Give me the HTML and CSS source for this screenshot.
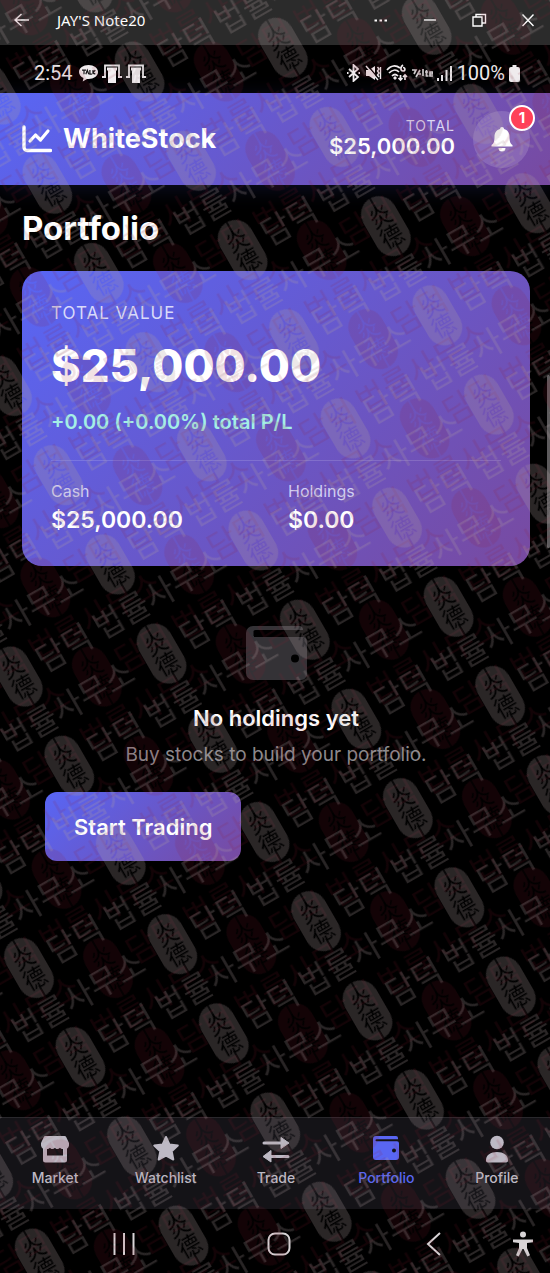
FILE: index.html
```html
<!DOCTYPE html>
<html lang="en">
<head>
<meta charset="utf-8">
<meta name="viewport" content="width=device-width, initial-scale=1">
<title>WhiteStock – Portfolio</title>
<link rel="stylesheet" href="styles.css">
</head>
<body>
<div class="screen">
  <div class="titlebar">
    <button class="icon-button" aria-label="Back"><svg width="18" height="18" viewBox="0 0 18 18"><path d="M16 9H2M8.500 3L2 9l6.500 6" class="line"/></svg></button>
    <span class="device-name">JAY'S Note20</span>
    <div class="window-controls">
      <button class="icon-button" aria-label="More"><svg width="18" height="18" viewBox="0 0 18 18"><path d="M2.500 8.500h2.500v2H2.500zM7.500 8.500h2.500v2H7.500zM12.500 8.500h2.500v2h-2.500z" fill="currentColor"/></svg></button>
      <button class="icon-button" aria-label="Minimize"><svg width="18" height="18" viewBox="0 0 18 18"><path d="M3 9h12" class="line"/></svg></button>
      <button class="icon-button" aria-label="Restore"><svg width="18" height="18" viewBox="0 0 18 18"><path d="M3 6h9v9H3zM6 6V3.500h9.500V12H12" class="line"/></svg></button>
      <button class="icon-button" aria-label="Close"><svg width="18" height="18" viewBox="0 0 18 18"><path d="M3.500 3.500l11 11.500M14.500 3.500l-11 11.500" class="line"/></svg></button>
    </div>
  </div>

  <div class="statusbar">
    <span>2:54</span>
    <svg class="talk" width="19" height="17" viewBox="0 0 19 17" aria-hidden="true"><path d="M9.500 0C4.200 0 0 3.100 0 7c0 2.600 1.800 4.800 4.500 6l-.8 3.600L8 13.900c.5.100 1 .1 1.500.1 5.300 0 9.500-3.100 9.500-7S14.800 0 9.500 0z" fill="#efebed"/><path d="M3 5.200h4M5 5.200v4M6.800 9.200l1.500-4 1.500 4M10.900 5v4.200h2M14 5v4.200M16.300 5.200L14 7.400l2.300 1.800" fill="none" stroke="#161416" stroke-width="1.200"/></svg>
    <svg width="20" height="19" viewBox="0 0 20 19" aria-hidden="true"><path d="M3 13V1.500h14V13M0 13h4M16 13h4" fill="none" stroke="#e8e4e6" stroke-width="1.800"/><path d="M5 3.500h10v3h-1V19H6V6.500H5z" fill="#f2eef0"/></svg>
    <svg width="20" height="19" viewBox="0 0 20 19" aria-hidden="true"><path d="M3 13V1.500h14V13M0 13h4M16 13h4" fill="none" stroke="#e8e4e6" stroke-width="1.800"/><path d="M5 3.500h10v3h-1V19H6V6.500H5z" fill="#f2eef0"/></svg>
    <div class="status-right">
      <svg width="15" height="18" viewBox="0 0 15 18" aria-hidden="true"><path d="M3 5l9 8-4.500 4V1L12 5l-9 8M1 9h1.500M12.500 9H14" fill="none" stroke="#efebed" stroke-width="1.800"/></svg>
      <svg width="17" height="16" viewBox="0 0 17 16" aria-hidden="true"><path d="M1 5h3l6-4v14l-6-4H1z" fill="#efebed"/><path d="M3 1l11 13" stroke="#000" stroke-width="1.200"/><path d="M1 1l12 14M12.500 2l1.500 2-1.500 2 1.500 2-1.500 2 1.500 2M15.500 2v12" fill="none" stroke="#efebed" stroke-width="1.400"/></svg>
      <svg width="22" height="18" viewBox="0 0 22 18" aria-hidden="true"><path d="M1 6c4-5 9-5 13-2M3 9c3-3 7-4 10-1M6 12c2-2 4-2 6 0M17 1c-3 2-2.500 6 0 6 2.500 0 2.500-3.500 0-3.500M14.500 11v5M12.500 14l2 2 2-2M19 16v-5M17 13l2-2 2 2" fill="none" stroke="#efebed" stroke-width="1.700"/><path d="M7 14l2-2 2 2-2 2z" fill="#efebed"/></svg>
      <svg width="21" height="10" viewBox="0 0 21 10" aria-hidden="true"><path d="M0 2h4L2 6M4 9l4-7M6 6h3M11 1v7M14.500 2v6h2M13 4h3M18 6h2.500V4H18v4h3" fill="none" stroke="#cfcbcd" stroke-width="1.700"/></svg>
      <svg width="16" height="16" viewBox="0 0 16 16" aria-hidden="true"><path d="M1 13v3M5 10v6M9.500 5v11M14 1v15" stroke="#e8e4e6" stroke-width="2"/></svg>
      <span>100%</span>
      <svg width="11" height="17" viewBox="0 0 11 17" aria-hidden="true"><path d="M3.500 0h4v2H9a2 2 0 0 1 2 2v11a2 2 0 0 1-2 2H2a2 2 0 0 1-2-2V4a2 2 0 0 1 2-2h1.500z" fill="#efebed"/></svg>
    </div>
  </div>

  <header class="app-header">
    <div class="brand">
      <svg width="30" height="28" viewBox="0 0 30 28" aria-hidden="true"><path d="M2 2v20.500a3 3 0 0 0 3 3h23.500" fill="none" stroke="#fff" stroke-width="3.400" stroke-linecap="round"/><path d="M8 16l5.500-6 5 5 7.500-9" fill="none" stroke="#fff" stroke-width="3.200" stroke-linecap="round" stroke-linejoin="round"/></svg>
      <span class="brand-name">WhiteStock</span>
    </div>
    <div class="header-total">
      <span class="header-label">TOTAL</span>
      <span class="header-value">$25,000.00</span>
    </div>
    <button class="bell" aria-label="Notifications, 1 new">
      <svg width="22" height="25" viewBox="0 0 22 25" aria-hidden="true"><path d="M11 0a2 2 0 0 1 2 2c3.500.900 5.500 3.800 5.500 7.500 0 5 .7 7 3 8.500v1.500H.5V18c2.300-1.500 3-3.500 3-8.500C3.500 5.800 5.500 2.900 9 2a2 2 0 0 1 2-2zM7.500 21h7a3.500 3.500 0 0 1-7 0z" fill="#fff"/></svg>
      <span class="badge">1</span>
    </button>
  </header>

  <main class="content">
    <h1 class="page-title">Portfolio</h1>
    <section class="card">
      <span class="card-label">TOTAL VALUE</span>
      <span class="card-value">$25,000.00</span>
      <span class="card-change">+0.00 (+0.00%) total P/L</span>
      <div class="split">
        <div class="stat"><span class="stat-label">Cash</span><span class="stat-value">$25,000.00</span></div>
        <div class="stat"><span class="stat-label">Holdings</span><span class="stat-value">$0.00</span></div>
      </div>
    </section>
    <section class="empty">
      <svg class="empty-icon" width="61" height="54" viewBox="0 0 61 54" aria-hidden="true"><path fill-rule="evenodd" d="M7 0h46a4 4 0 0 1 4 4H9.500a3 3 0 0 0-2 1V10H55a6 6 0 0 1 6 6v32a6 6 0 0 1-6 6H7a7 7 0 0 1-7-7V7a7 7 0 0 1 7-7zM49 28.500a4 4 0 1 0 0 8 4 4 0 0 0 0-8z" fill="#343236"/><path d="M8 7h49v4H8z" fill="#000"/></svg>
      <h2 class="empty-title">No holdings yet</h2>
      <p class="empty-text">Buy stocks to build your portfolio.</p>
      <button class="primary">Start Trading</button>
    </section>
  </main>

  <nav class="tabs">
    <a class="tab" href="#market"><svg width="28" height="28" viewBox="0 0 28 28" aria-hidden="true"><path fill-rule="evenodd" d="M4.500 1h19a2 2 0 0 1 1.800 1.200L28 8v2.500a4 4 0 0 1-2 3.200V25a2.500 2.500 0 0 1-2.500 2.500h-19A2.500 2.500 0 0 1 2 25V13.700a4 4 0 0 1-2-3.200V8l2.700-5.800A2 2 0 0 1 4.500 1zM6 14v6.500h16V14c-1.500 0-2.500-.5-3-1.300-1.500 1.700-4 1.700-5 0-1.500 1.700-4 1.700-5 0-.8.800-1.800 1.300-3 1.300z" fill="currentColor"/></svg><span>Market</span></a>
    <a class="tab" href="#watchlist"><svg width="28" height="28" viewBox="0 0 28 28" aria-hidden="true"><path d="M14 2l3.500 7.600 8.300 1-6.100 5.700 1.600 8.200L14 20.500l-7.300 4 1.600-8.200-6.100-5.700 8.300-1z" fill="currentColor" stroke="currentColor" stroke-width="2" stroke-linejoin="round"/></svg><span>Watchlist</span></a>
    <a class="tab" href="#trade"><svg width="28" height="28" viewBox="0 0 28 28" aria-hidden="true"><path d="M2 8h18M8 21.500h18" stroke="currentColor" stroke-width="3" stroke-linecap="round"/><path d="M19 2.500L27 8l-8 5.500zM9 15.500L1 21.500 9 27z" fill="currentColor" stroke="currentColor" stroke-linejoin="round"/></svg><span>Trade</span></a>
    <a class="tab active" href="#portfolio" aria-current="page"><svg width="28" height="28" viewBox="0 0 28 28" aria-hidden="true"><path fill-rule="evenodd" d="M4 1h20a2 2 0 0 1 2 2v1.300H4.500a1 1 0 0 0 0 2H25a2 2 0 0 1 2 2V22a3 3 0 0 1-3 3H4a3 3 0 0 1-3-3V4a3 3 0 0 1 3-3zM22 13.500a2 2 0 1 0 0 4 2 2 0 0 0 0-4z" fill="currentColor"/></svg><span>Portfolio</span></a>
    <a class="tab" href="#profile"><svg width="28" height="28" viewBox="0 0 28 28" aria-hidden="true"><circle cx="14" cy="7.500" r="6.800" fill="currentColor"/><path d="M3 25c0-5 4.500-8 11-8s11 3 11 8a2 2 0 0 1-2 2.500H5A2 2 0 0 1 3 25z" fill="currentColor"/></svg><span>Profile</span></a>
  </nav>

  <div class="system-nav">
    <button class="icon-button" aria-label="Recent apps"><svg width="24" height="24" viewBox="0 0 24 24"><path d="M2.500 1v22M12 1v22M21.500 1v22" class="line thick"/></svg></button>
    <button class="icon-button" aria-label="Home"><svg width="24" height="24" viewBox="0 0 24 24"><rect x="1.500" y="1.500" width="21" height="21" rx="6.500" class="line thick"/></svg></button>
    <button class="icon-button" aria-label="Go back"><svg width="24" height="24" viewBox="0 0 24 24"><path d="M19 1L7 12l12 11" class="line thick"/></svg></button>
    <button class="icon-button" aria-label="Accessibility"><svg width="24" height="26" viewBox="0 0 24 26"><circle cx="12" cy="3.500" r="3" fill="currentColor"/><path d="M2 8.500h20v2.800l-6 .7v5l3 7.200-2.700 1.300L12.500 18h-1L7.700 25.500 5 24.200 8 17v-5l-6-.700z" fill="currentColor"/></svg></button>
  </div>

  <span class="scroll-thumb"></span>
  <svg class="watermark" width="100%" height="100%" aria-hidden="true">
    <defs>
      <mask id="seal-cut" maskUnits="userSpaceOnUse" x="-20" y="-34" width="40" height="68">
        <rect x="-18" y="-32" width="36" height="64" rx="18" fill="#fff"/>
        <path d="M0 -32v12M0 20v12" stroke="#000" stroke-width="1.500"/>
        <text class="seal-text" x="0" y="-3">炎</text>
        <text class="seal-text" x="0" y="20">德</text>
      </mask>
      <g id="seal"><rect x="-18" y="-32" width="36" height="64" rx="18" mask="url(#seal-cut)"/></g>
      <g id="mark"><use href="#seal"/><text class="mark-text" x="25" y="10">담덕 법률사무소</text></g>
      <g id="marks">
        <use href="#mark" x="20" y="34"/>
        <use href="#mark" x="20" y="137"/>
        <use href="#mark" x="156" y="85"/>
        <use href="#mark" x="156" y="-18"/>
        <use href="#mark" x="-116" y="85"/>
        <use href="#mark" x="-116" y="-18"/>
      </g>
      <pattern id="grey-marks" width="272" height="103" patternUnits="userSpaceOnUse" patternTransform="translate(29 968) rotate(-30) translate(-20 -34)"><use href="#marks" class="grey-fill"/></pattern>
      <pattern id="red-marks" width="272" height="103" patternUnits="userSpaceOnUse" patternTransform="translate(108 968) rotate(-30) translate(-20 -34)"><use href="#marks" class="red-fill"/></pattern>
    </defs>
    <rect class="red-layer" width="100%" height="100%" fill="url(#red-marks)"/>
    <rect class="grey-layer" width="100%" height="100%" fill="url(#grey-marks)"/>
  </svg>
</div>
</body>
</html>
```
FILE: styles.css
```css
* { box-sizing: border-box; }
body { margin: 0; background: #000; color: #fff; font-family: Inter, "Liberation Sans", sans-serif; }
button { font: inherit; color: inherit; border: 0; background: none; padding: 0; cursor: pointer; }
h1, h2, p { margin: 0; }
svg { display: block; flex: none; }

.screen { position: relative; display: flex; flex-direction: column; min-height: 100vh; overflow: hidden; }

.line { fill: none; stroke: currentColor; stroke-width: 1.4; }
.thick { stroke-width: 2; }
.icon-button { display: grid; place-items: center; }

.titlebar { display: flex; align-items: center; height: 45px; padding: 0 13px 6px; background: #2b2b2b; font: 15px/20px "Noto Sans", "Open Sans", sans-serif; }
.device-name { margin-left: 26px; }
.window-controls { display: flex; gap: 31px; margin-left: auto; }

.statusbar { display: flex; align-items: center; gap: 4px; height: 48px; padding: 8px 30px 0 34px; font: 20px/24px Roboto, sans-serif; color: #efebed; }
.talk { margin-left: 2px; }
.status-right { display: flex; align-items: center; gap: 4px; margin-left: auto; }

.app-header { position: relative; display: flex; align-items: center; height: 92px; padding: 0 20px 0 22px; background: linear-gradient(135deg, #5866f5, #784aa0); box-shadow: 0 4px 20px rgba(88, 101, 242, 0.15); }
.brand { display: flex; align-items: center; gap: 11px; }
.brand-name { font-size: 27px; line-height: 36px; font-weight: 700; }
.header-total { display: flex; flex-direction: column; align-items: flex-end; margin: 0 18px 0 auto; padding-bottom: 4px; }
.header-label { font-size: 14px; line-height: 18px; letter-spacing: 1px; color: #dcd8f4; }
.header-value { font-size: 22px; line-height: 22px; font-weight: 600; }
.bell { position: relative; display: grid; place-items: center; width: 57px; height: 57px; border-radius: 50%; background: rgba(255, 255, 255, 0.15); }
.badge { position: absolute; top: -6px; right: -5px; width: 26px; height: 26px; border: 2px solid #fff; border-radius: 50%; background: #ff4058; font-size: 15px; line-height: 22px; font-weight: 700; text-align: center; }

.content { flex: 1; padding: 24px 20px 24px 22px; }
.page-title { font-size: 33px; line-height: 38px; font-weight: 700; }
.card { display: flex; flex-direction: column; margin-top: 24px; padding: 30px 29px; border-radius: 20px; background: linear-gradient(135deg, #5866f5, #784aa0); }
.card-label { font-size: 17px; line-height: 24px; letter-spacing: 1px; color: #d9daf9; }
.card-value { margin-top: 12px; font-size: 45px; line-height: 58px; font-weight: 800; }
.card-change { margin-top: 14px; font-size: 20px; line-height: 26px; font-weight: 600; color: #a4efe6; }
.split { display: grid; grid-template-columns: 1fr 1fr; gap: 24px; margin-top: 25px; padding-top: 20px; border-top: 1px solid rgba(255, 255, 255, 0.15); }
.stat { display: flex; flex-direction: column; }
.stat-label { font-size: 16px; line-height: 20px; color: #d2d0f4; }
.stat-value { margin-top: 4px; font-size: 23px; line-height: 31px; font-weight: 600; }

.empty { display: flex; flex-direction: column; align-items: center; padding: 60px 23px 0; }
.empty-title { margin-top: 24px; font-size: 22px; line-height: 28px; font-weight: 600; }
.empty-text { margin-top: 10px; font-size: 19px; line-height: 26px; color: #8c898c; }
.primary { align-self: flex-start; margin-top: 24px; padding: 0 29px; height: 69px; border-radius: 12px; background: linear-gradient(135deg, #5866f5, #784aa0); font-size: 22px; font-weight: 600; }

.tabs { display: grid; grid-template-columns: repeat(5, 1fr); height: 92px; margin-right: -2px; padding-top: 17px; border-top: 1px solid #29282c; background: #141317; }
.tab { display: flex; flex-direction: column; align-items: center; gap: 5px; color: #bdb9c4; font-size: 14px; line-height: 20px; font-weight: 500; text-decoration: none; }
.active { color: #5966f2; }

.system-nav { display: flex; align-items: center; justify-content: space-between; height: 64px; padding: 6px 15px 0 112px; color: #d8d4d6; }
.system-nav .icon-button:nth-child(3) { margin-right: -65px; }

.scroll-thumb { position: absolute; right: 0; top: 375px; width: 3px; height: 173px; border-radius: 2px; background: #5d5b5d; }
.watermark { position: absolute; inset: 0; pointer-events: none; }
.grey-fill { fill: #af9ea0; }
.red-fill { fill: #901830; }
.grey-layer { opacity: 0.24; }
.red-layer { opacity: 0.13; }
.mark-text { font: 400 32px "Noto Sans CJK KR", sans-serif; }
.seal-text { font: 400 23px "Noto Sans CJK KR", sans-serif; text-anchor: middle; fill: #000; }
```
